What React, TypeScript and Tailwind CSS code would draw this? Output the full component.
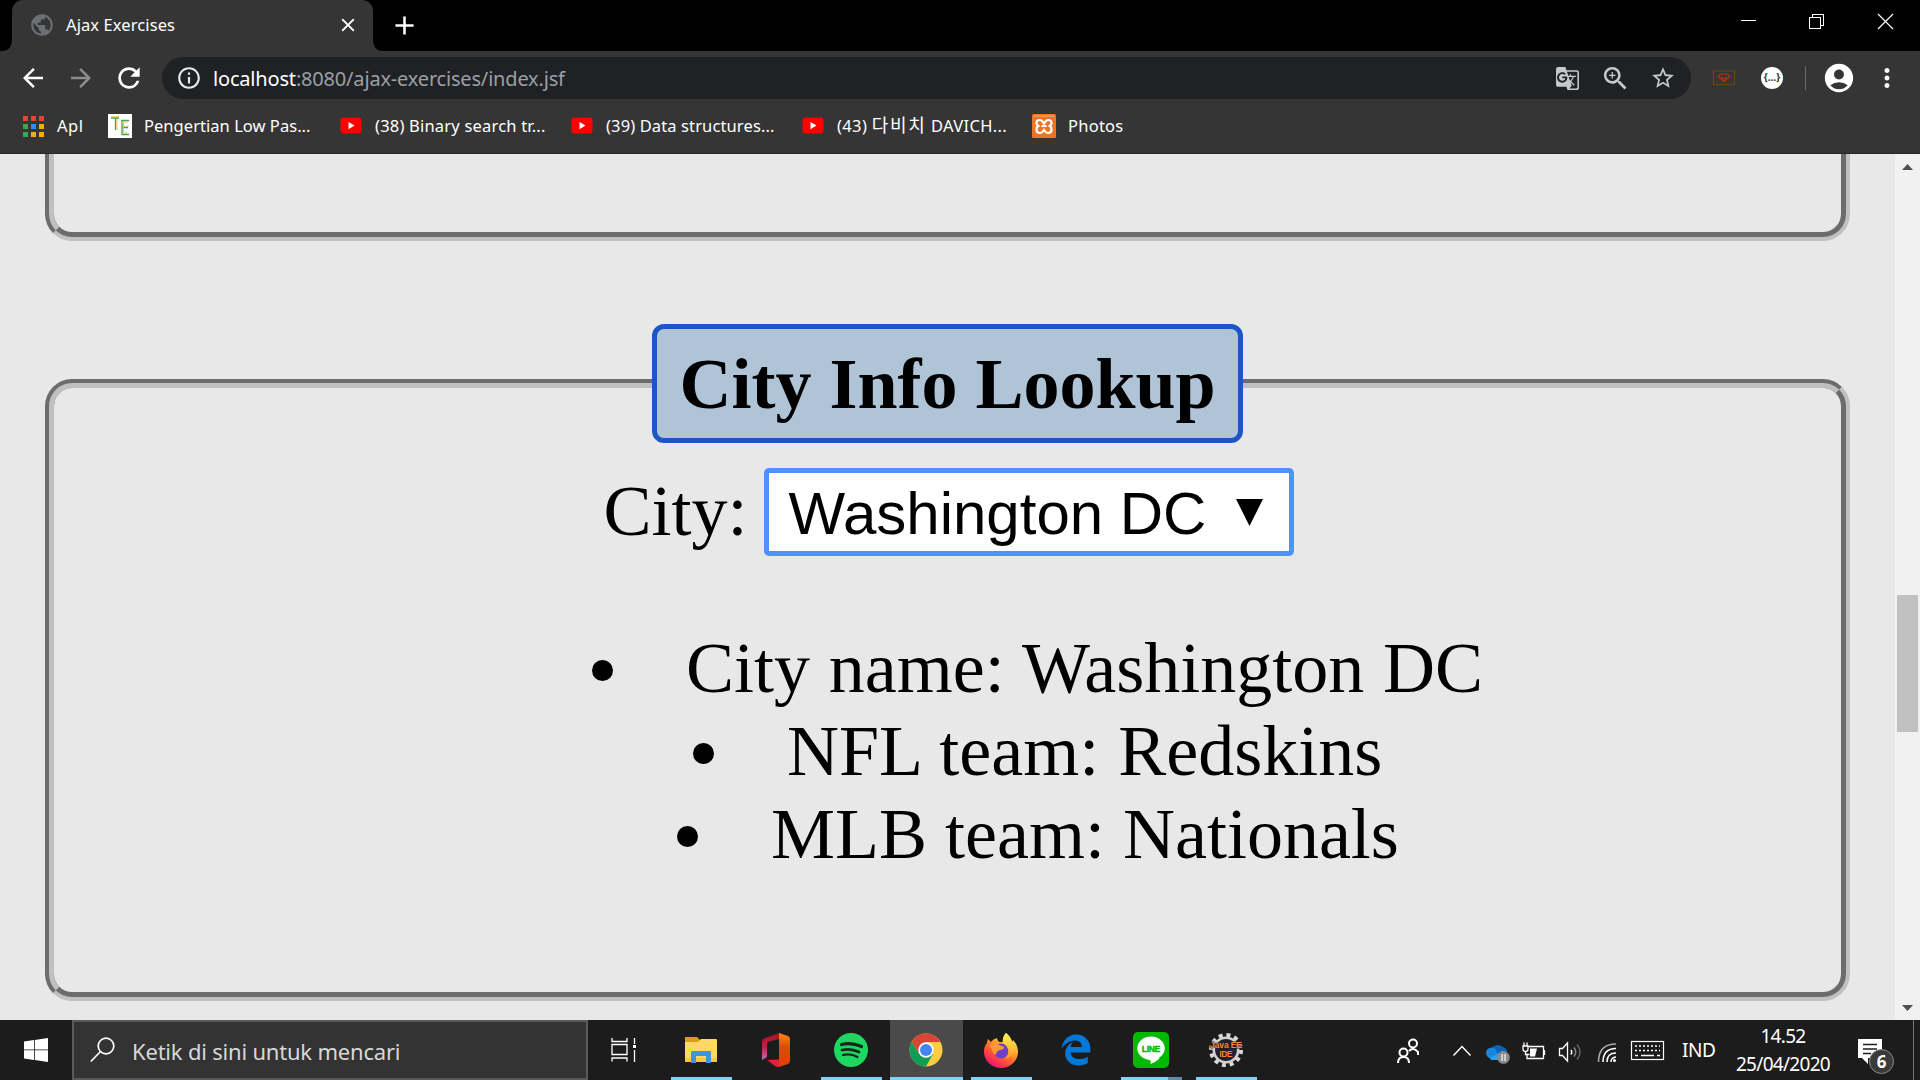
import React from "react";
import {
  MdAccountCircle,
  MdAdd,
  MdArrowBack,
  MdArrowForward,
  MdClose,
  MdGTranslate,
  MdInfoOutline,
  MdMoreVert,
  MdPublic,
  MdRefresh,
  MdStarBorder,
  MdZoomIn,
} from "react-icons/md";
import { FaEdgeLegacy } from "react-icons/fa6";

const APP_COLORS = ["#ea4335", "#ea4335", "#ea4335", "#34a853", "#2a8cff", "#fbab05", "#34a853", "#fbab05", "#fbab05"];

function YouTubeIcon() {
  return (
    <svg width="22" height="18" viewBox="0 0 22 18" className="shrink-0">
      <rect x="0.5" y="0.5" width="21" height="16" rx="3" fill="#f00" />
      <path d="M8.500 5v7.200l6-3.600z" fill="#fff" />
    </svg>
  );
}

function TitleBar() {
  return (
    <div className="flex h-[51px] items-stretch bg-black">
      <div className="flex w-3 items-end">
        <svg width="12" height="12">
          <path d="M12 0v12H2Q12 12 12 0z" fill="#353535" />
        </svg>
      </div>
      <div className="flex w-[361px] items-center rounded-t-[11px] bg-[#353535] pl-[17px]">
        <MdPublic size={26} color="#6b6f73" className="-mt-px" />
        <span className="ml-[11px] w-[271px] whitespace-nowrap pb-px text-[16.5px] tracking-[0.1px] text-white">Ajax Exercises</span>
        <MdClose size={22} color="#fff" className="-mt-px" />
      </div>
      <div className="flex w-3 items-end">
        <svg width="12" height="12">
          <path d="M0 0v12h10Q0 12 0 0z" fill="#353535" />
        </svg>
      </div>
      <div className="ml-1 flex items-center pb-px">
        <MdAdd size={31} color="#fff" />
      </div>
      <svg width="160" height="51" viewBox="1740 0 160 51" className="ml-auto mr-5" fill="none" stroke="#fff" shapeRendering="crispEdges">
        <path d="M1741 20.500h15" />
        <path d="M1809.500 17.500h11v11h-11z M1812.500 17v-2.500h11v11h-3" />
        <path d="M1878 14l15 15M1893 14l-15 15" shapeRendering="auto" strokeWidth="1.200" />
      </svg>
    </div>
  );
}

function Toolbar() {
  return (
    <div className="flex h-[54px] items-center">
      <div className="ml-[18px] flex w-[144px] items-center">
        <MdArrowBack size={30} color="#fff" />
        <MdArrowForward size={30} color="#8d8d8d" className="ml-[18px]" />
        <MdRefresh size={32} color="#fff" className="ml-[17px]" />
      </div>
      <div className="flex h-[42px] w-[1529px] items-center rounded-full bg-[#202124] pl-[14px]">
        <MdInfoOutline size={26} color="#e8eaed" />
        <span className="ml-[11px] whitespace-nowrap pt-px text-[20px] tracking-[-0.18px] text-[#9aa0a6]">
          <span className="text-white">localhost</span>:8080/ajax-exercises/index.jsf
        </span>
        <div className="ml-auto mr-[15px] flex items-center text-[#c8c9ca]">
          <MdGTranslate size={25} />
          <MdZoomIn size={31} className="ml-[20px]" />
          <MdStarBorder size={26} className="ml-[19px]" />
        </div>
      </div>
      <svg width="24" height="16" className="ml-[21px]" fill="none">
        <rect x="1.500" y="1" width="21" height="13.500" stroke="#6f430d" strokeWidth="1.200" />
        <path d="M8.500 4h7l2.500 2.500-6 5-6-5z M9 7l3 2 3-2" stroke="#b8301c" strokeWidth="1.100" />
      </svg>
      <div className="ml-[25px] flex size-[22px] items-center justify-center rounded-full bg-white pb-px text-[10px] font-bold text-[#333]">
        {"{…}"}
      </div>
      <div className="ml-[22px] h-6 w-px bg-[#6b6b6b]" />
      <MdAccountCircle size={34} color="#fff" className="ml-[16px]" />
      <MdMoreVert size={30} color="#fff" className="ml-[16px]" />
    </div>
  );
}

function Bookmark({ children, label, className }: { children: React.ReactNode; label: React.ReactNode; className: string }) {
  return (
    <div className={`flex items-center whitespace-nowrap ${className}`}>
      {children}
      <span>{label}</span>
    </div>
  );
}

function BookmarksBar() {
  return (
    <div className="flex h-[49px] items-center border-b border-[#262626] pb-[6px] text-[16.5px] text-white">
      <Bookmark label="Apl" className="ml-[23px] w-[85px] gap-[13px] tracking-[0.5px]">
        <div className="grid grid-cols-3 gap-x-[3px] gap-y-[3px]">
          {APP_COLORS.map((c, i) => (
            <div key={i} className="size-[5px]" style={{ backgroundColor: c }} />
          ))}
        </div>
      </Bookmark>
      <Bookmark label="Pengertian Low Pas..." className="w-[232px] gap-3 tracking-[0.04px]">
        <svg width="24" height="24" fill="none">
          <path fill="#fff" d="M0 0h24v24H0z" />
          <path d="M3 4h8M7.500 4v12M13 6.500h8M14 6.500v14h7M14 13.500h6" stroke="#4b9f50" strokeWidth="1.300" />
          <path d="M3 2.800h8M9 5v11M13 8h7M15.500 8v11h5M15.500 12.200h5" stroke="#d8cf3c" strokeWidth="1" />
        </svg>
      </Bookmark>
      <Bookmark label="(38) Binary search tr..." className="w-[231px] gap-[13px] tracking-[0.2px]">
        <YouTubeIcon />
      </Bookmark>
      <Bookmark label="(39) Data structures..." className="w-[231px] gap-[13px] tracking-[0.12px]">
        <YouTubeIcon />
      </Bookmark>
      <Bookmark
        label={
          <>
            (43) <span className="text-[18px] leading-none tracking-[1.6px]">다비치</span> DAVICH...
          </>
        }
        className="w-[230px] gap-[13px] tracking-[0.35px]"
      >
        <YouTubeIcon />
      </Bookmark>
      <Bookmark label="Photos" className="gap-3 tracking-[0.25px]">
        <svg width="24" height="24" fill="none">
          <rect width="24" height="24" rx="1.500" fill="#ee7623" />
          <path d="M2 2h20" stroke="#f7b07c" strokeWidth="1" />
          <path d="M10.500 7.500Q9.500 6 7.500 6 4.500 6 4.500 9t3 3q-3 0-3 3.500t3.500 3.500q2 0 4-3 2 3 4 3 3.500 0 3.500-3.500t-3-3.500q3 0 3-3t-3-3q-2 0-3 1.500L12 9.500zM9.500 12h5" stroke="#fff" strokeWidth="2.200" />
        </svg>
      </Bookmark>
    </div>
  );
}

function InfoItem({ text, className }: { text: string; className: string }) {
  return (
    <li className={`flex h-[83px] items-center ${className}`}>
      <span className="mt-[5px] size-[21px] shrink-0 rounded-full bg-black" />
      <span className="ml-[73px] whitespace-nowrap pt-px">{text}</span>
    </li>
  );
}

function Page() {
  return (
    <div className="flex h-[866px] bg-[#e8e8e8]">
      <main className="flex h-[866px] w-[1895px] flex-col overflow-hidden pl-[45px] font-['Liberation_Serif',serif] text-[72px] leading-[83px] text-black">
        <div className="h-[87px] w-[1805px] shrink-0 overflow-hidden">
          <div className="-mt-[60px] h-[147px] rounded-[27px] border-[9px] border-[#c0c0c0] [border-style:groove]" />
        </div>
        <section className="mt-[138px] flex h-[622px] w-[1805px] shrink-0 flex-col items-center rounded-[27px] border-[9px] border-[#c0c0c0] [border-style:groove]">
          <h2 className="-mt-[64px] h-[119px] w-[591px] shrink-0 rounded-[12px] border-[5px] border-[#1c56c4] bg-[#b0c4d8] pt-[14px] text-center font-bold">
            City Info Lookup
          </h2>
          <div className="mt-[25px] flex h-[88px] w-[690px] items-center">
            <span className="w-[161px] shrink-0 pb-[2px] pl-px">City:</span>
            <div className="flex h-[88px] w-[530px] shrink-0 items-center rounded-[5px] border-[5px] border-[#4d90fe] bg-white pl-[20px] font-['Liberation_Sans',sans-serif] text-[60px] leading-[69px]">
              <span className="w-[447px] whitespace-nowrap pt-[3px]">Washington DC</span>
              <svg width="28" height="28">
                <path d="M0 1h27L13.500 28z" fill="#000" />
              </svg>
            </div>
          </div>
          <ul className="mt-[70px] w-[1787px]">
            <InfoItem text="City name: Washington DC" className="ml-[538px] [word-spacing:0.7px]" />
            <InfoItem text="NFL team: Redskins" className="ml-[639px] [word-spacing:1px]" />
            <InfoItem text="MLB team: Nationals" className="ml-[623px]" />
          </ul>
        </section>
      </main>
      <div className="flex w-[25px] flex-col items-center bg-[#f1f1f1]">
        <svg width="11" height="6" className="mt-[10px]">
          <path d="M0 6h11L5.500 0z" fill="#505050" />
        </svg>
        <div className="mt-[425px] h-[137px] w-[21px] bg-[#c1c1c1]" />
        <svg width="11" height="6" className="mb-[9px] mt-auto">
          <path d="M0 0h11L5.500 6z" fill="#505050" />
        </svg>
      </div>
    </div>
  );
}

function FolderIcon() {
  return (
    <svg width="33" height="28" viewBox="0 0 33 28">
      <path d="M0 1h12l3 3v5H0z" fill="#dc9f13" />
      <path d="M0 6h13l3-3h15a1 1 0 0 1 1 1v21a1 1 0 0 1-1 1H1a1 1 0 0 1-1-1z" fill="#ffd766" />
      <path d="M0 22h32v3a1 1 0 0 1-1 1H1a1 1 0 0 1-1-1z" fill="#f5c84d" />
      <path d="M6 27V16a1 1 0 0 1 1-1h18a1 1 0 0 1 1 1v11h-5v-7H11v7z" fill="#3a96dd" />
    </svg>
  );
}

function OfficeIcon() {
  return (
    <svg width="28" height="34" viewBox="0 0 28 34">
      <defs>
        <linearGradient id="officeLeft" x1="0" y1="0" x2="0" y2="1">
          <stop offset="0" stopColor="#a80f1c" />
          <stop offset="0.550" stopColor="#b8284a" />
          <stop offset="1" stopColor="#c66ab8" />
        </linearGradient>
        <linearGradient id="officeRight" x1="0" y1="0" x2="0" y2="1">
          <stop offset="0" stopColor="#ff8a0c" />
          <stop offset="0.400" stopColor="#e04c04" />
          <stop offset="1" stopColor="#dc3c08" />
        </linearGradient>
      </defs>
      <path d="M17 0L2 5.500Q0 6.500 0 9v18l5-3V11q0-2 2-2.500l10-2.500z" fill="url(#officeLeft)" />
      <path d="M5 27l12-.5V34l-3-.3z" fill="#e01f3d" />
      <path d="M17 0l9 3q2 1 2 3v22q0 2-2 3l-9 3z" fill="url(#officeRight)" />
    </svg>
  );
}

function SpotifyIcon() {
  return (
    <svg width="34" height="34" viewBox="0 0 34 34" fill="none" stroke="#15271a" strokeLinecap="round">
      <circle cx="17" cy="17" r="17" fill="#1ed760" stroke="none" />
      <path d="M7.500 11.500q10-2.500 20 2" strokeWidth="3.200" />
      <path d="M8 17q9-2 17 2" strokeWidth="2.700" />
      <path d="M9 22q8-1.700 14.500 2" strokeWidth="2.200" />
    </svg>
  );
}

function ChromeIcon() {
  return (
    <svg width="34" height="34" viewBox="0 0 34 34">
      <circle cx="17" cy="17" r="16.500" fill="#ffcd41" />
      <path d="M17 9h14.300A16.500 16.500 0 0 0 2.700 8.700L10 21z" fill="#db4437" />
      <path d="M2.700 8.700A16.500 16.500 0 0 0 17 33.500L24 21H10z" fill="#0f9d58" />
      <circle cx="17" cy="17" r="7.700" fill="#fff" />
      <circle cx="17" cy="17" r="6" fill="#4285f4" />
    </svg>
  );
}

function FirefoxIcon() {
  return (
    <svg width="34" height="35" viewBox="0 0 34 35">
      <defs>
        <linearGradient id="foxBody" x1="0.900" y1="0.050" x2="0.300" y2="1">
          <stop offset="0" stopColor="#fff44f" />
          <stop offset="0.350" stopColor="#ffb22c" />
          <stop offset="0.600" stopColor="#ff6b2b" />
          <stop offset="0.850" stopColor="#ff2e50" />
          <stop offset="1" stopColor="#e31587" />
        </linearGradient>
        <linearGradient id="foxTail" x1="0" y1="0" x2="0" y2="1">
          <stop offset="0" stopColor="#fff44f" />
          <stop offset="1" stopColor="#ff9a2b" />
        </linearGradient>
      </defs>
      <path d="M22 0q5 4 6 9 1-1 1-2 5 5 5 12a17 16 0 0 1-34 0q0-6 3-9 0-2 1-4l3 3q2-3 6-4 0 2 2 4h4q-1-5 3-9z" fill="url(#foxBody)" />
      <circle cx="17" cy="18" r="7.500" fill="#6f41c8" />
      <path d="M22 0q5 4 6 9 3 5 1 11-3 6-8 5 5-4 3-9-1-4-5-6-1-5 3-10z" fill="url(#foxTail)" />
      <path d="M5 13l7-3 5 3q3 0 3 2-1 2-4 2-4 1-4 5-4-2-4-6z" fill="#ff9838" />
    </svg>
  );
}

function LineIcon() {
  return (
    <svg width="36" height="36" viewBox="0 0 36 36">
      <rect width="36" height="36" rx="5" fill="#00b900" />
      <ellipse cx="18" cy="16.300" rx="13.700" ry="11.700" fill="#fff" />
      <path d="M14 26h13q-4 4-9.500 6 .8-3-.5-4z" fill="#fff" />
      <text x="18" y="19.800" textAnchor="middle" fontFamily="Liberation Sans, sans-serif" fontWeight="700" fontSize="8.500" textLength="18.500" fill="#00b900" stroke="#00b900" strokeWidth="0.400">LINE</text>
    </svg>
  );
}

function JavaIcon() {
  return (
    <svg width="36" height="36" viewBox="0 0 36 36">
      <circle cx="18" cy="18" r="14.800" fill="none" stroke="#d8d8d8" strokeWidth="4.400" strokeDasharray="3.900 3.850" />
      <circle cx="18" cy="18" r="12.200" fill="#241d33" stroke="#d0d0d0" strokeWidth="2.600" />
      <g fontFamily="Liberation Sans, sans-serif" fontWeight="700" fill="#f58a2c" stroke="#2a1a18" strokeWidth="1" paintOrder="stroke">
        <text x="18" y="16" textAnchor="middle" fontSize="8.500" textLength="32">Java EE</text>
        <text x="18" y="24.500" textAnchor="middle" fontSize="8.500" textLength="13">IDE</text>
      </g>
    </svg>
  );
}

function TaskButton({ children, className, line = true, active = false }: { children: React.ReactNode; className: string; line?: boolean; active?: boolean }) {
  return (
    <div className={`flex h-[60px] shrink-0 flex-col items-center ${active ? "bg-[#4a4a4a]" : ""} ${className}`}>
      <div className="flex h-[57px] items-center justify-center pr-px pt-[3px]">{children}</div>
      {line && <div className="h-[3px] w-full bg-[#81d2f4]" />}
    </div>
  );
}

function Tray() {
  return (
    <svg width="288" height="60" viewBox="1390 1020 288 60" fill="none" stroke="#fff" strokeWidth="1.500">
      <circle cx="1413" cy="1043.500" r="4" strokeWidth="2" />
      <path d="M1409 1051q4-4.500 9 1v3" strokeWidth="2" />
      <circle cx="1403.500" cy="1052.500" r="4" strokeWidth="2" />
      <path d="M1398 1063q0-6 5.500-6t5.500 6" strokeWidth="2" />
      <path d="M1453.500 1055.500l8.500-9 8.500 9" />
      <g stroke="none">
        <path d="M1490 1051a8 8 0 0 1 13-4q4 1 4 5l-8 5z" fill="#0a64b5" />
        <circle cx="1491.500" cy="1053" r="5.500" fill="#1a86db" />
        <path d="M1490 1058l12-7q5 0 6 4.500-1 4.500-5 4.500h-12z" fill="#2ba0ee" />
        <circle cx="1503.500" cy="1057.500" r="6.300" fill="#8a8a8a" />
        <path d="M1501.500 1054h1.200v7h-1.200zM1504.500 1054h1.200v7h-1.200z" fill="#fff" />
      </g>
      <path d="M1528 1046.500h15.500v12H1527v-5M1544.500 1050v5M1523 1046v3q0 2.500 2.500 2.500t2.500-2.500v-3zM1524 1042.500v3M1527 1042.500v3M1525.500 1051v3.500h4" strokeWidth="1.300" />
      <path d="M1530 1048.500h7l-2 8h-5z" fill="#fff" stroke="none" />
      <path d="M1559.500 1048.500h3l5-5.500v18l-5-5.500h-3z" strokeWidth="1.300" />
      <path d="M1571 1050q1.500 2 0 4.500" />
      <path d="M1574 1047.500q3.500 4.500 0 9" stroke="#8a8a8a" />
      <path d="M1577 1044.500q6 7.500 0 15" stroke="#666" />
      <path d="M1598.500 1062q0-18 17.500-18" stroke="#aaa" />
      <path d="M1603 1062q0-13.500 13-13.500M1607 1062q0-9 9-9M1611 1062q0-4.500 5-5" />
      <circle cx="1614.500" cy="1060.500" r="1.500" fill="#fff" stroke="none" />
      <rect x="1631.500" y="1041.500" width="32" height="18" strokeWidth="1.200" />
      <path d="M1635 1046h25M1635 1050.500h25" strokeDasharray="2 2" />
      <path d="M1635 1055.500h3M1641 1055.500h13M1657 1055.500h3" />
    </svg>
  );
}

function Taskbar() {
  return (
    <div className="flex h-[60px] bg-[#1c1c1c]">
      <div className="flex w-[72px] items-center justify-center">
        <svg width="24" height="24" fill="#fff">
          <path d="M0 3.400l10-1.400v9.500H0zM10.800 1.900L24 0v11.500H10.800zM0 12.300h10v9.600L0 20.500zM10.800 12.300H24V24l-13.200-1.900z" />
        </svg>
      </div>
      <div className="flex h-[60px] w-[516px] items-center border-2 border-[#5a5a5a] bg-[#333] pl-4">
        <svg width="26" height="26" fill="none" stroke="#fff" strokeWidth="1.700">
          <circle cx="16" cy="9" r="7.800" />
          <path d="M10.500 14.500L.8 24.500" />
        </svg>
        <span className="ml-[16px] whitespace-nowrap pt-px text-[22px] leading-7 tracking-[-0.2px] text-[#d8d8d8]">Ketik di sini untuk mencari</span>
      </div>
      <TaskButton line={false} className="w-[73px]">
        <svg width="26" height="26" fill="none" stroke="#fff" strokeWidth="1.300">
          <path d="M1 1v3.500h15V1M1 24.500V21h15v3.500M1 7.500h15v10H1zM23.500 1v6M23.500 13v12" />
          <path d="M22 8h3v3h-3z" fill="#fff" stroke="none" />
        </svg>
      </TaskButton>
      <TaskButton className="ml-[10px] w-[61px]"><FolderIcon /></TaskButton>
      <TaskButton line={false} className="ml-[14px] w-[61px]"><OfficeIcon /></TaskButton>
      <TaskButton className="ml-[14px] w-[61px]"><SpotifyIcon /></TaskButton>
      <TaskButton active className="ml-[8px] w-[73px]"><ChromeIcon /></TaskButton>
      <TaskButton className="ml-[8px] w-[61px]"><FirefoxIcon /></TaskButton>
      <TaskButton line={false} className="ml-[14px] w-[61px]"><FaEdgeLegacy size={32} color="#0078d7" /></TaskButton>
      <div className="ml-[14px] flex w-[61px] flex-col items-center">
        <div className="flex h-[57px] items-center pr-px pt-[3px]"><LineIcon /></div>
        <div className="flex h-[3px] w-full">
          <div className="w-[47px] bg-[#81d2f4]" />
          <div className="grow bg-[#5a8ea6]" />
        </div>
      </div>
      <TaskButton className="ml-[14px] w-[61px]"><JavaIcon /></TaskButton>
      <div className="ml-auto flex w-[530px] text-[19px] text-white">
        <Tray />
        <div className="w-[57px] pl-1 pt-[16px] leading-7 tracking-[-0.5px]">IND</div>
        <div className="w-[96px] whitespace-nowrap pt-[2px] text-center leading-[28px] tracking-[-0.7px]">
          <div>14.52</div>
          <div>25/04/2020</div>
        </div>
        <svg width="44" height="60" viewBox="1852 1020 44 60" className="ml-[21px]">
          <path d="M1858 1039h24v19h-14v6l-6-6h-4z" fill="#fff" />
          <path d="M1863 1044.500h14M1863 1049h14M1863 1053.500h8" stroke="#1c1c1c" strokeWidth="1.300" />
          <circle cx="1881.500" cy="1061.500" r="12" fill="#3a3a3a" stroke="#8a8a8a" />
          <text x="1881.500" y="1067.500" textAnchor="middle" fontFamily="Open Sans, sans-serif" fontSize="17" fontWeight="700" fill="#fff">6</text>
        </svg>
        <div className="ml-auto mr-[6px] w-px bg-[#777]" />
      </div>
    </div>
  );
}

export default function App() {
  return (
    <div className="flex h-[1080px] w-[1920px] flex-col overflow-hidden bg-[#353535] font-['Noto_Sans','Noto_Sans_CJK_KR',sans-serif]">
      <TitleBar />
      <Toolbar />
      <BookmarksBar />
      <Page />
      <Taskbar />
    </div>
  );
}
